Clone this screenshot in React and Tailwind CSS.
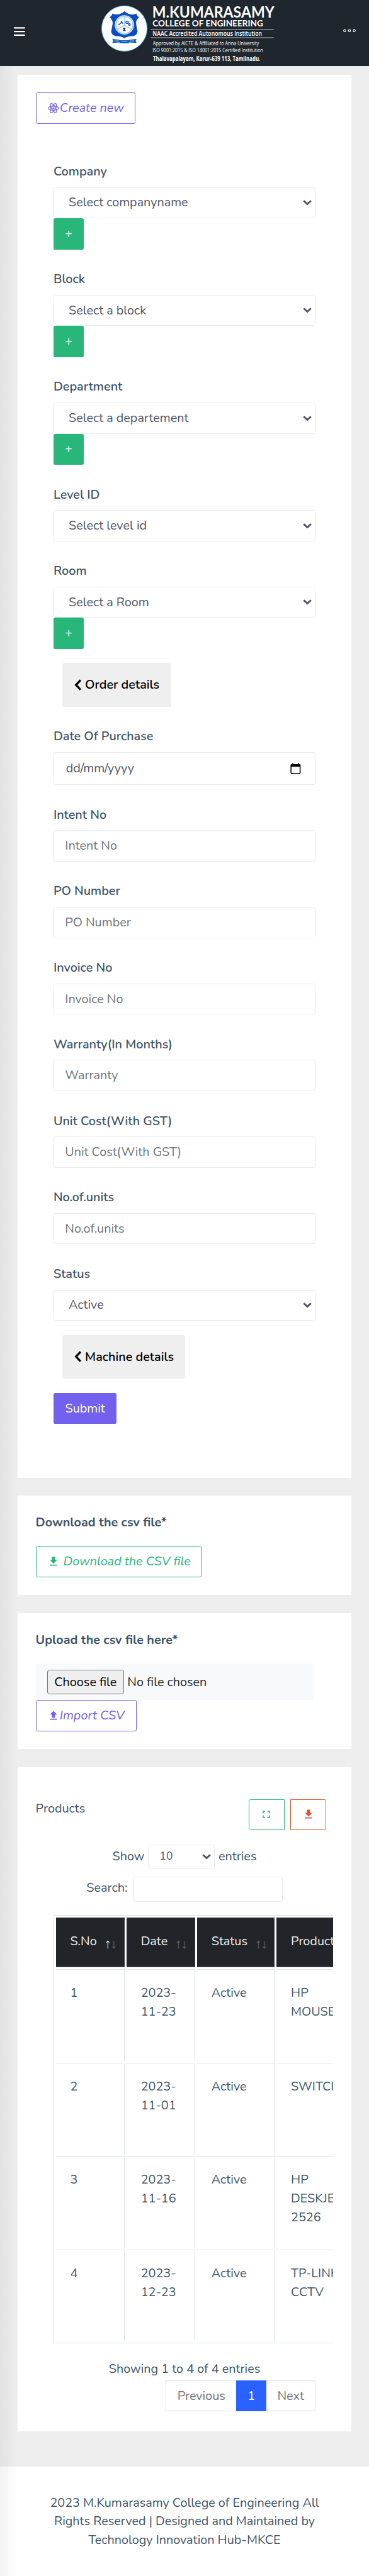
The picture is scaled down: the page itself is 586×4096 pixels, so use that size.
import React from 'react';

const DOWNLOAD = 'M5,20H19V18H5M19,9H15V3H9V9H5L12,16L19,9Z';
const UPLOAD = 'M9,16V10H5L12,3L19,10H15V16H9M5,20V18H19V20H5Z';
const FULLSCREEN = 'M5,5H10V7H7V10H5V5M14,5H19V10H17V7H14V5M17,14H19V19H14V17H17V14M10,17V19H5V14H7V17H10Z';

const rows = [
  { no: '1', date: '2023-11-23', status: 'Active', product: ['HP', 'MOUSE'], height: 'h-[103.2px]' },
  { no: '2', date: '2023-11-01', status: 'Active', product: ['SWITCH'], height: 'h-[102.5px]' },
  { no: '3', date: '2023-11-16', status: 'Active', product: ['HP', 'DESKJET', '2526'], height: 'h-[103.2px]' },
  { no: '4', date: '2023-12-23', status: 'Active', product: ['TP-LINK', 'CCTV'], height: 'h-[102.5px]' },
];

function Glyph({ d }) {
  return (
    <svg viewBox="0 0 24 24" className="size-[14px] shrink-0 fill-current">
      <path d={d} />
    </svg>
  );
}

function Atom() {
  return (
    <svg viewBox="0 0 24 24" className="size-[14px] shrink-0 fill-none stroke-current" strokeWidth="1.5">
      <circle cx="12" cy="12" r="2" className="fill-current stroke-none" />
      <ellipse cx="12" cy="12" rx="9.8" ry="4" />
      <ellipse cx="12" cy="12" rx="9.8" ry="4" transform="rotate(60 12 12)" />
      <ellipse cx="12" cy="12" rx="9.8" ry="4" transform="rotate(120 12 12)" />
    </svg>
  );
}

function Caret() {
  return (
    <svg viewBox="0 0 10 6" className="h-[6px] w-[10px] shrink-0 fill-none stroke-[#4f5467]" strokeWidth="2">
      <path d="M0.9 0.9 L5 4.7 L9.1 0.9" />
    </svg>
  );
}

function Field({ label, children }) {
  return (
    <div className="pt-[23px]">
      <label className="mb-[7px] block h-[21px] font-semibold">{label}</label>
      {children}
    </div>
  );
}

function Select({ value }) {
  return (
    <div className="flex h-[35px] items-center justify-between rounded-[2px] border border-[#e9ecef] pr-[3.5px] pl-[16.3px] text-[#4f5467]">
      <span>{value}</span>
      <Caret />
    </div>
  );
}

function Input({ placeholder }) {
  return (
    <div className="flex h-[35px] items-center rounded-[2px] border border-[#e9ecef] px-[12.3px] text-[#6c757d]">
      {placeholder}
    </div>
  );
}

function Plus() {
  return (
    <button className="flex h-[35px] w-[34px] items-center justify-center rounded-[2px] bg-[#28b779] text-white">+</button>
  );
}

function Back({ children }) {
  return (
    <button className="ml-[10px] flex h-[49px] items-center gap-[4px] rounded-[2px] bg-[#efefef] pr-[13px] pl-[13.5px] font-semibold text-black">
      <svg viewBox="0 0 8 13" className="h-[13px] w-[8px] fill-none stroke-current" strokeWidth="2.4">
        <path d="M7 1 L1.9 6.4 L7 11.8" />
      </svg>
      {children}
    </button>
  );
}

function Sort({ active }) {
  return (
    <svg viewBox="0 0 12 10" className="absolute right-[9px] bottom-[18.5px] h-[10px] w-[12px] fill-none" strokeWidth="0.8">
      <path d="M3 9.3 V1.2 M1.2 3 L3 1 L4.8 3" className={active ? 'stroke-[#e8e8e8]' : 'stroke-[#5c5f62]'} />
      <path d="M9.8 0.9 V9 M8 7.2 L9.8 9.2 L11.6 7.2" className="stroke-[#5c5f62]" />
    </svg>
  );
}

function Logo() {
  const open = 'fill-white font-["Open_Sans",sans-serif]';
  return (
    <svg viewBox="110 0 200 74" className="ml-[81.7px] h-[74px] w-[200px] overflow-visible">
      <g transform="translate(110 0) scale(0.166667)">
        <circle cx="176" cy="192" r="153" fill="#fff" stroke="#4fb3df" strokeWidth="4" />
        <path d="M176 76 Q150 98 120 97 Q103 96 95 91 Q91 110 77 114 Q101 140 97 160 Q92 190 87 212 Q90 238 118 243 Q155 243 176 258 Q197 243 234 243 Q262 238 265 212 Q260 190 255 160 Q251 140 275 114 Q261 110 257 91 Q249 96 232 97 Q202 98 176 76Z" fill="#0b4cc0" />
        <circle cx="176" cy="168" r="65" fill="#d6ecf8" />
        <circle cx="176" cy="168" r="57" fill="#fff" stroke="#9cc9e6" strokeWidth="6" />
        <path d="M176 112 V170 L128 198 M176 170 L224 198" fill="none" stroke="#9cc9e6" strokeWidth="6" />
        <path d="M155 140 Q160 150 166 160 M155 142 V154 L136 168" fill="none" stroke="#0b4cc0" strokeWidth="6" />
        <circle cx="194" cy="150" r="8" fill="none" stroke="#0b4cc0" strokeWidth="6" />
        <circle cx="210" cy="165" r="6" fill="#6ba4dc" stroke="#0b4cc0" strokeWidth="5" />
        <path d="M167 186 H183 V196 H178 V204 H184 V209 H167 V204 H172 V196 H167Z" fill="#1b2a6b" />
        <path d="M94 263 L146 268 V271 H206 V268 L258 263 L252 276 L258 289 L206 286 V291 H146 V286 L94 289 L101 276Z" fill="#0b5cb8" />
        <path d="M110 276 H140 M156 281 H196 M212 276 H242" stroke="#7ec3ea" strokeWidth="5" />
      </g>
      <text x="170.6" y="19.8" textLength="137" lengthAdjust="spacingAndGlyphs" fontSize="17.8" fontWeight="700" className='fill-white font-["Lato",sans-serif]'>M.KUMARASAMY</text>
      <text x="171" y="29.8" textLength="124" lengthAdjust="spacingAndGlyphs" fontSize="9.2" fontWeight="700" className='fill-white font-["Lato",sans-serif]'>COLLEGE OF ENGINEERING</text>
      <path d="M169 33.2 H307 M169 42.3 H307" stroke="#8d9195" strokeWidth="1" />
      <text x="171" y="40.5" textLength="122.8" lengthAdjust="spacingAndGlyphs" fontSize="7.2" fontWeight="600" className={open}>NAAC Accredited Autonomous Institution</text>
      <text x="171.3" y="50.9" textLength="119" lengthAdjust="spacingAndGlyphs" fontSize="6.4" className={open}>Approved by AICTE &amp; Affiliated to Anna University</text>
      <text x="171" y="58.9" textLength="124" lengthAdjust="spacingAndGlyphs" fontSize="6.2" className={open}>ISO 9001:2015 &amp; ISO 14001:2015 Certified Institution</text>
      <text x="171.5" y="68.8" textLength="120.3" lengthAdjust="spacingAndGlyphs" fontSize="7.4" fontWeight="700" className={open}>Thalavapalayam, Karur-639 113, Tamilnadu.</text>
    </svg>
  );
}

export default function App() {
  return (
    <div className="h-[4096px] w-[586px] overflow-hidden">
      <div className='relative flex h-[2894px] w-[414px] flex-col bg-[#eeeeee] font-["Nunito","Lato",sans-serif] text-[14px] leading-[21px] text-[#3e5569] [zoom:1.41546]'>
        <header className="flex h-[74px] shrink-0 items-center bg-[#1f262d] pr-[15px] pl-[15.8px]">
          <svg viewBox="0 0 12.5 10" className="mt-[-3px] h-[10px] w-[12.5px] fill-white">
            <path d="M0 0.2 H12.5 V1.8 H0Z M0 4.2 H12.5 V5.8 H0Z M0 8.3 H12.5 V9.9 H0Z" />
          </svg>
          <Logo />
          <svg viewBox="0 0 14 4" className="mt-[-5px] ml-auto h-[4px] w-[14px] fill-none stroke-white" strokeWidth="0.8">
            <circle cx="1.7" cy="2" r="1.2" />
            <circle cx="7" cy="2" r="1.2" />
            <circle cx="12.4" cy="2" r="1.2" />
          </svg>
        </header>

        <main className="flex h-[2697px] shrink-0 flex-col px-[20px] pt-[10px]">
          <section className="h-[1576px] bg-white p-[20px]">
            <button className="flex h-[35px] w-[112px] items-center rounded-[2px] border border-[#7460ee] pl-[12.3px] text-[#7460ee]">
              <Atom />
              <i>Create new</i>
            </button>
            <form className="px-[20px] pt-[20.25px]">
              <Field label="Company"><Select value="Select companyname" /><Plus /></Field>
              <Field label="Block"><Select value="Select a block" /><Plus /></Field>
              <Field label="Department"><Select value="Select a departement" /><Plus /></Field>
              <Field label="Level ID"><Select value="Select level id" /></Field>
              <Field label="Room"><Select value="Select a Room" /><Plus /></Field>
              <div className="pt-[15.75px]"><Back>Order details</Back></div>
              <Field label="Date Of Purchase">
                <div className="flex h-[37px] items-center justify-between rounded-[2px] border border-[#e9ecef] pr-[15.5px] pl-[13.3px] text-[#4f5467]">
                  <span>dd/mm/yyyy</span>
                  <svg viewBox="0 0 12 13" className="h-[13px] w-[12px] fill-none stroke-black" strokeWidth="1.1">
                    <rect x="0.8" y="2" width="10.2" height="10" rx="0.8" />
                    <path d="M0.8 3 H11" strokeWidth="2.6" />
                    <path d="M2.8 0.4 V2 M9.2 0.4 V2" />
                  </svg>
                </div>
              </Field>
              <Field label="Intent No"><Input placeholder="Intent No" /></Field>
              <Field label="PO Number"><Input placeholder="PO Number" /></Field>
              <Field label="Invoice No"><Input placeholder="Invoice No" /></Field>
              <Field label="Warranty(In Months)"><Input placeholder="Warranty" /></Field>
              <Field label="Unit Cost(With GST)"><Input placeholder="Unit Cost(With GST)" /></Field>
              <Field label="No.of.units"><Input placeholder="No.of.units" /></Field>
              <Field label="Status"><Select value="Active" /></Field>
              <div className="pt-[16px]"><Back>Machine details</Back></div>
              <button className="mt-[16px] h-[35px] w-[71px] rounded-[2px] bg-[#7460ee] text-white">Submit</button>
            </form>
          </section>

          <section className="mt-[20px] h-[112px] bg-white p-[20px]">
            <h5 className="font-bold">Download the csv file*</h5>
            <button className="mt-[16px] flex h-[35px] w-[187px] items-center rounded-[2px] border border-[#28b779] pl-[12.3px] text-[#28b779]">
              <Glyph d={DOWNLOAD} />
              <i className="ml-[4px]">Download the CSV file</i>
            </button>
          </section>

          <section className="mt-[20px] h-[153px] bg-white p-[20px]">
            <h5 className="font-bold">Upload the csv file here*</h5>
            <div className="mt-[16px] flex h-[41px] w-[312px] items-center gap-[4px] rounded-[2px] bg-[#f8f9fb] pl-[13px] text-[#212529]">
              <button className="h-[27px] w-[86px] rounded-[2.5px] border border-[#767676] bg-[#efefef] text-black">Choose file</button>
              <span>No file chosen</span>
            </div>
            <button className="flex h-[35px] w-[113px] items-center rounded-[2px] border border-[#7460ee] pl-[12.3px] text-[#7460ee]">
              <Glyph d={UPLOAD} />
              <i>Import CSV</i>
            </button>
          </section>

          <section className="mt-[20px] h-[746px] bg-white px-[20px] pt-[36px]">
            <div className="flex justify-between pr-[8px]">
              <h5>Products</h5>
              <div className="flex gap-[7px]">
                <button className="flex h-[35px] w-[40px] items-center justify-center rounded-l-[2px] border border-[#28b779] text-[#28b779]">
                  <Glyph d={FULLSCREEN} />
                </button>
                <button className="flex h-[35px] w-[40px] items-center justify-center rounded-r-[2px] border border-[#da542e] text-[#da542e]">
                  <Glyph d={DOWNLOAD} />
                </button>
              </div>
            </div>

            <div className="mt-[16px] flex items-center justify-center gap-[4px]">
              <span className="-mt-[1px]">Show</span>
              <div className="flex h-[27.5px] w-[75px] items-center justify-between rounded-[2px] border border-[#e9ecef] pr-[3.5px] pl-[12.3px] text-[12.25px] text-[#4f5467]">
                <span>10</span>
                <Caret />
              </div>
              <span className="-mt-[1px]">entries</span>
            </div>
            <div className="mt-[8.5px] flex items-center justify-center gap-[7px]">
              <span className="-mt-[3px]">Search:</span>
              <div className="h-[28.5px] w-[167px] rounded-[2px] border border-[#e9ecef]" />
            </div>

            <div className="mt-[14.5px] ml-[20px] h-[482.5px] w-[314px] overflow-hidden">
              <table className="w-[403px] table-fixed border-separate border-spacing-[2.2px] border border-[#dee2e6]">
                <colgroup>
                  <col className="w-[77.1px]" />
                  <col className="w-[77.1px]" />
                  <col className="w-[87.1px]" />
                  <col />
                </colgroup>
                <thead>
                  <tr className="h-[55.9px] text-[#eeeeee]">
                    {['S.No', 'Date', 'Status', 'Product'].map((h, i) => (
                      <th key={h} className="relative border-t border-r border-b-2 border-[#32383e] bg-[#212529] pt-[16px] pl-[16px] text-left align-top font-normal">
                        {h}
                        {i < 3 && <Sort active={i === 0} />}
                      </th>
                    ))}
                  </tr>
                </thead>
                <tbody>
                  {rows.map((r) => (
                    <tr key={r.no} className={`${r.height} align-top`}>
                      <td className="border-t border-r border-[#dee2e6] pt-[16px] pl-[16px]">{r.no}</td>
                      <td className="border-t border-r border-[#dee2e6] pt-[16px] pr-[12px] pl-[16px]">{r.date}</td>
                      <td className="border-t border-r border-[#dee2e6] pt-[16px] pl-[16px]">{r.status}</td>
                      <td className="border-t border-r border-[#dee2e6] pt-[16px] pl-[16px]">
                        {r.product.map((p) => <div key={p}>{p}</div>)}
                      </td>
                    </tr>
                  ))}
                </tbody>
              </table>
            </div>

            <div className="mt-[17.5px] text-center">Showing 1 to 4 of 4 entries</div>
            <div className="mt-[2px] flex justify-end pr-[20px] text-[#6c757d]">
              <div className="flex h-[35px] w-[79px] items-center justify-center rounded-l-[2px] border border-r-0 border-[#dee2e6]">Previous</div>
              <div className="flex h-[35px] w-[34px] items-center justify-center bg-[#2962ff] text-white">1</div>
              <div className="flex h-[35px] w-[55px] items-center justify-center rounded-r-[2px] border border-l-0 border-[#dee2e6]">Next</div>
            </div>
          </section>
        </main>

        <footer className="flex-1 bg-white pt-[30px] text-center">
          <p>2023 M.Kumarasamy College of Engineering All</p>
          <p>Rights Reserved | Designed and Maintained by</p>
          <p>Technology Innovation Hub-MKCE</p>
        </footer>

        <div className="absolute top-[74px] bottom-0 left-0 w-[20px] bg-linear-to-r from-black/5 to-transparent" />
      </div>
    </div>
  );
}
